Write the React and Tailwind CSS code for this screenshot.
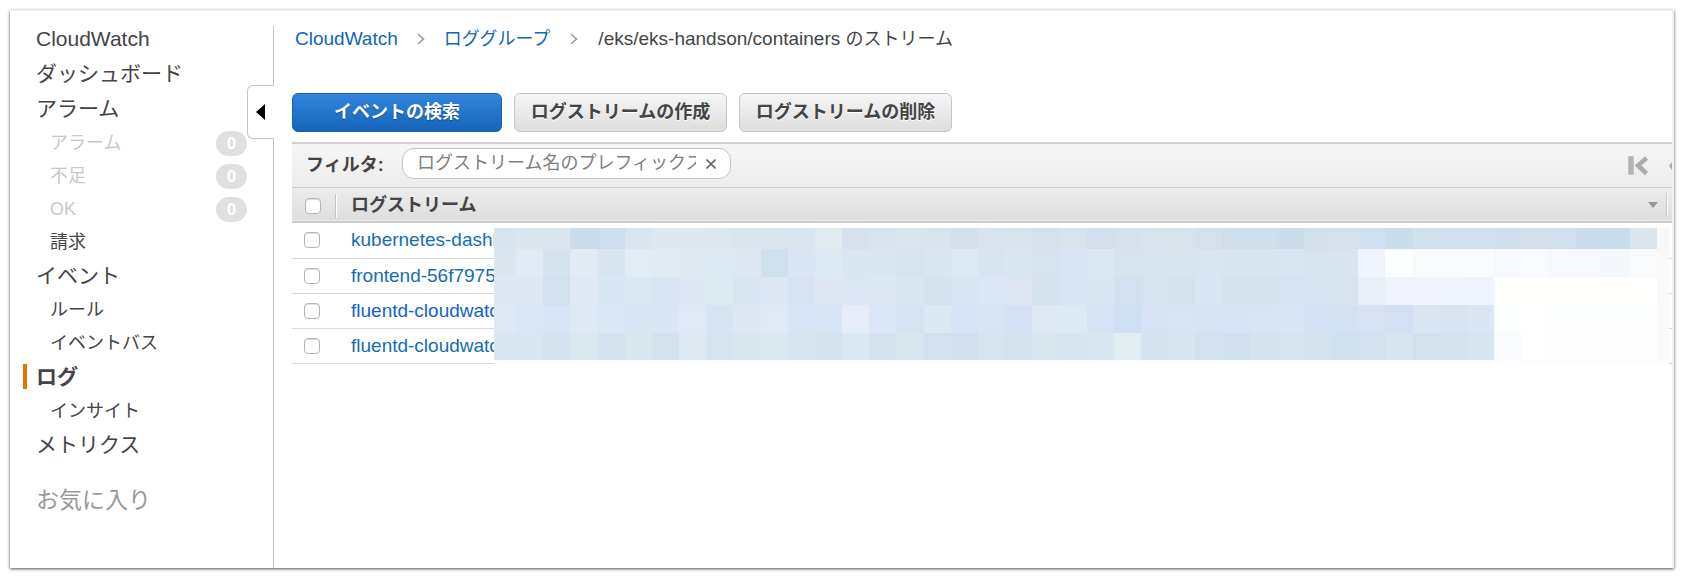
import clsx from "clsx";

const NAV = [
  { label: "CloudWatch" },
  { label: "ダッシュボード" },
  { label: "アラーム" },
  { label: "アラーム", sub: true, count: 0 },
  { label: "不足", sub: true, count: 0 },
  { label: "OK", sub: true, count: 0 },
  { label: "請求", sub: true },
  { label: "イベント" },
  { label: "ルール", sub: true },
  { label: "イベントバス", sub: true },
  { label: "ログ", active: true },
  { label: "インサイト", sub: true },
  { label: "メトリクス" },
];

const STREAMS = [
  { id: 1, name: "kubernetes-dashb", cls: "text-[#146eb4]" },
  { id: 2, name: "frontend-56f7975", cls: "text-[#146eb4]" },
  { id: 3, name: "fluentd-cloudwatc", cls: "text-[#0f62cc]" },
  { id: 4, name: "fluentd-cloudwatc", cls: "text-[#146eb4]" },
];

// redacted part of the stream names, one colour per block
const MOSAIC = [
  {
    h: 21,
    cells:
      "d8e5ee dbe7ef dae7ef cbdceb cddded d9e6ef dde8f1 dde8f1 dde7ef d9e6ee d9e6ee d9e6ef dfebef d6e1ed d7e3ee d9e6ee d8e5ed d4dfec d8e3ef d8e5ed d2e1eb d6e4ec d2e0ee d5e1ed d7e4ec d7e4ec d2e1ec cedfeb cedfeb ccddea d1e0eb d5e0ec d1e0ee cadeea d2e0eb d1dfec d1dfec d0deec d3e0eb d1dfec ccdcea c9dcea dbe5ee f8f8f8",
  },
  {
    h: 28,
    cells:
      "dae7ef e0ebf5 d3e4ee e1ebf4 d8e5f0 e1ecf5 e1ebf4 dfe9f2 dceaf3 dce8f2 cfe1ed d9e6f3 dceaf4 dae7f0 d9e7f2 d6e4ef d9e7f2 dceaf3 d9e4f1 d8e7f1 d5e4ee d9e5f2 dbe8f1 d6e4ee d5e4ee d7e5ef d8e6f1 d7e5ef d7e5ef d8e6f1 d6e4ee d9e4f1 eef3fc fcfffe f9fafc f9fafc fafbfd f7f8fd f9fafd f7f8fd f7f8fd f3f8fc f9fafc f9f9fa",
  },
  {
    h: 28,
    cells:
      "dee8f3 dee8f3 d3e1ef e0e9f3 d9e6f3 dce7f4 d9e5f2 dde8f4 dceaf2 d9e5f2 dbe7f3 d6e4f2 dee7f3 dbe7f5 dde8f3 dae6f2 d5e3ee d8e5f2 dbe7f4 dde6f2 d5e3ef d9e5f2 dbe6f3 d1e1f0 d6e4ef d5e3ef d9e6f3 d5e3ef d5e3ef d6e3f0 d6e3f0 d7e4f0 e8eff7 f0f3fc f1f4fd eef3fc eef3fd fffffe fffffe fffffe fffffe fffffe fffffe f9f9fa",
  },
  {
    h: 28,
    cells:
      "dfe9f6 dbe6f6 d8e5f7 dfe8f5 dbe7f6 dae6f5 dae6f6 e0eaf7 d8e4f6 dee8f5 e0e9f6 d8e5f6 d8e5f6 e7edf8 dbe7f6 d6e3f5 dce9f5 d7e4f6 d9e5f5 d5e2f5 dfe9f6 dde9f5 d3e4f4 cfe0f2 d7e3f4 d9e5f5 d8e4f4 d7e4f5 d9e5f5 d9e6f6 d1e0f3 d3e2f2 d6e3f4 d1e0f4 dbe6f4 d7e4f4 dae6f6 fcfefd fefffe fdfefe fdfefe fdfefe fdfefe f9f9fa",
  },
  {
    h: 27,
    cells:
      "dbe7f0 dae7f1 d5e3ee dbe9ef d5e3ee dae7ef d4e2ed dfe9f2 d6e4ee d9e6ee dbe8f0 d7e5ef d5e3ed dae8f1 d5e3ed d9e6ee d1e2ee d0e0ed d8e5ef d4e2ed d9e6ee d8e4ef d9e7f1 e1edf1 d5e3ef d7e5ef d1e1ed cfe1ec d5e3ee d6e4ee d4e2ee d0e0ec d1e1ed d7e5ef d2e2ed d5e3ef d7e5f0 f8fafd fffffd fefefe fefefe fefefe fefefe f9f9fa",
  },
  { h: 5, cells: Array(44).fill("fcfcfc").join(" ") },
];

// column edges of the blocks; the first and last are cut short
const EDGES = [0, ...Array.from({ length: 43 }, (_, i) => 22 + Math.round((i * 1141) / 42)), 1175];

function Mosaic() {
  let y = 0;
  return (
    <svg
      viewBox="0 0 1175 137"
      preserveAspectRatio="none"
      shapeRendering="crispEdges"
      className="absolute top-[5px] left-[202px] h-[137px] w-[calc(100%-205px)]"
      aria-hidden="true"
    >
      {MOSAIC.map((row, r) => {
        const top = y;
        y += row.h;
        return row.cells
          .split(" ")
          .map((c, i) => (
            <rect key={`${r}-${i}`} x={EDGES[i]} y={top} width={EDGES[i + 1] - EDGES[i]} height={row.h} fill={`#${c}`} />
          ));
      })}
    </svg>
  );
}

function Chevron() {
  return (
    <svg viewBox="0 0 8 14" className="h-[14px] w-2 shrink-0" fill="none" stroke="#999" strokeWidth="1.6">
      <path d="M1 2l5.5 5L1 12" />
    </svg>
  );
}

function NavItem({ item }) {
  const muted = item.count !== undefined;
  return (
    <li
      className={clsx(
        "flex items-center justify-between pr-[26px]",
        item.sub ? "h-[33px] pt-[2px] pl-10 text-[18px]" : "h-[35px] pl-[26px] text-[21px]",
        item.active && "relative font-bold"
      )}
    >
      {item.active && <span className="absolute top-[5px] left-[13px] h-[25px] w-1 bg-[#e07700]" />}
      <a href="#" className={muted ? "text-[#c8c8c8]" : "text-[#444]"}>
        {item.label}
      </a>
      {muted && (
        <span className="flex h-[25px] w-[31px] items-center justify-center rounded-full bg-[#e0e0e0] text-[17px] font-bold text-white">
          {item.count}
        </span>
      )}
    </li>
  );
}

function Sidebar() {
  return (
    <aside className="relative mt-[15px] w-[264px] shrink-0 border-r border-[#c4c4c4]">
      <nav className="-mt-[5px]">
        <ul>
          {NAV.map((item, i) => (
            <NavItem key={i} item={item} />
          ))}
        </ul>
        <h2 className="mt-5 pl-[26px] text-[23px] leading-9 text-[#999]">お気に入り</h2>
      </nav>
      <button
        type="button"
        aria-label="メニューを閉じる"
        className="absolute top-[59px] -right-px flex h-[54px] w-[27px] items-center rounded-l-md border border-r-0 border-[#c4c4c4] bg-white pl-2"
      >
        <svg viewBox="0 0 9 16" className="h-4 w-[9px]">
          <path d="M9 0v16L0 8z" fill="#000" />
        </svg>
      </button>
    </aside>
  );
}

function ActionButton({ primary, children }) {
  return (
    <button
      type="button"
      className={clsx(
        "h-[39px] rounded-md border text-[18px] font-bold",
        primary
          ? "w-[210px] border-[#1a5fad] bg-linear-to-b from-[#2f86dc] to-[#1765ba] text-white text-shadow-[0_1px_1px_#0d4a8f]"
          : "w-[213px] border-[#c6c6c6] bg-linear-to-b from-[#f5f5f5] to-[#dedede] text-[#444] text-shadow-[0_1px_0_#fff]"
      )}
    >
      {children}
    </button>
  );
}

function Check({ label, header }) {
  return (
    <input
      type="checkbox"
      aria-label={label}
      className={clsx(
        "block size-4 appearance-none rounded-sm border border-[#b4b4b4] bg-white shadow-[inset_0_1px_1px_#ddd]",
        header ? "ml-[13px]" : "ml-3"
      )}
    />
  );
}

function FilterBar() {
  return (
    <div className="flex h-[46px] items-center border-t-2 border-b border-[#cfcfcf] bg-linear-to-b from-[#f6f6f6] to-[#ececec] pl-[14px]">
      <label htmlFor="prefix" className="w-24 shrink-0 text-[18px] font-bold text-[#444]">
        フィルタ:
      </label>
      <div className="-mt-1 flex h-[31px] w-[329px] shrink-0 items-center rounded-xl border border-[#c4c4c4] bg-white px-[14px]">
        <input
          id="prefix"
          type="text"
          placeholder="ログストリーム名のプレフィックス"
          className="w-[279px] shrink-0 bg-transparent text-[18px] text-[#444] outline-none placeholder:text-[#808080]"
        />
        <button type="button" aria-label="クリア" className="ml-auto">
          <svg viewBox="0 0 10 10" className="size-[10px]" stroke="#666" strokeWidth="1.6">
            <path d="M0.5 0.5l9 9M9.5 0.5l-9 9" />
          </svg>
        </button>
      </div>
      <div className="ml-auto flex shrink-0 items-center gap-[21px]">
        <button type="button" aria-label="最初のページ">
          <svg viewBox="0 0 20 20" className="size-5">
            <path d="M0.500 0.500h5v18h-5z" fill="#b4b4b4" stroke="#c4c4c4" />
            <path d="M18.500 2L10 9.500l8.500 8" fill="none" stroke="#adadad" strokeWidth="4.500" />
          </svg>
        </button>
        <span className="w-[3px] overflow-hidden">
          <svg viewBox="0 0 3 8" className="h-2 w-[3px]">
            <path d="M3 0v8L0 4z" fill="#a8a8a8" />
          </svg>
        </span>
      </div>
    </div>
  );
}

function StreamTable() {
  return (
    <div>
      <table className="w-full table-fixed border-collapse">
        <thead>
          <tr className="h-[34px] border-b-2 border-[#cccccc] bg-linear-to-b from-[#ededed] to-[#dedede]">
            <th className="w-[59px] p-0">
              <div className="flex items-center pt-[2px]">
                <Check header label="すべて選択" />
                <span className="ml-[14px] h-6 w-[2px] border-r border-l border-r-white border-l-[#c4c4c4]" />
              </div>
            </th>
            <th className="p-0 text-left text-[18px] leading-8 font-bold text-[#444]">
              <div className="flex items-center justify-between">
                ログストリーム
                <span className="flex items-center gap-2 pr-1">
                  <svg viewBox="0 0 10 6" className="h-[6px] w-[10px]">
                    <path d="M0 0h10L5 6z" fill="#999" />
                  </svg>
                  <span className="h-6 w-[2px] border-r border-l border-r-white border-l-[#c4c4c4]" />
                </span>
              </div>
            </th>
          </tr>
        </thead>
      </table>
      <div className="relative">
        <table className="w-full table-fixed border-collapse">
          <tbody>
            {STREAMS.map((s) => (
              <tr key={s.id} className="h-[35px] border-b border-[#d9d9d9]">
                <td className="w-[59px] p-0">
                  <Check label={s.name} />
                </td>
                <td className="p-0 text-[19px] leading-8">
                  <a href="#" className={s.cls}>
                    {s.name}
                  </a>
                </td>
              </tr>
            ))}
          </tbody>
        </table>
        <Mosaic />
      </div>
    </div>
  );
}

export default function App() {
  return (
    <div className="flex min-h-screen bg-white px-[10px] pt-[10px] pb-[14px] font-['Liberation_Sans','Noto_Sans_CJK_JP',sans-serif] text-[#444]">
      <div className="flex min-w-0 grow overflow-hidden border-t border-r-2 border-[#eef2f2] bg-white shadow-[0_1px_3px_rgba(0,0,0,0.7)]">
        <Sidebar />
        <main className="min-w-0 grow pl-[18px]">
          <nav className="mt-3 flex h-8 items-center pl-[3px] text-[19px]">
            <a href="#" className="text-[#1166bb]">
              CloudWatch
            </a>
            <span className="px-[19px]">
              <Chevron />
            </span>
            <a href="#" className="text-[18px] text-[#1166bb]">
              ロググループ
            </a>
            <span className="px-5">
              <Chevron />
            </span>
            <span>
              /eks/eks-handson/containers <span className="text-[18px]">のストリーム</span>
            </span>
          </nav>
          <div className="mt-[38px] mb-[10px] flex gap-3">
            <ActionButton primary>イベントの検索</ActionButton>
            <ActionButton>ログストリームの作成</ActionButton>
            <ActionButton>ログストリームの削除</ActionButton>
          </div>
          <FilterBar />
          <StreamTable />
        </main>
      </div>
    </div>
  );
}
